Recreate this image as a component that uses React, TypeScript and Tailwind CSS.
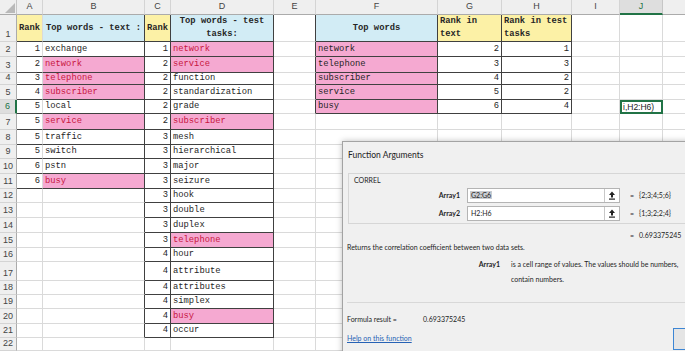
import React from "react";

type Fill = "pink" | "yellow" | "cyan";

interface CellData {
  text: string;
  align?: "left" | "right" | "center";
  fill?: Fill;
  hot?: boolean;
  bold?: boolean;
}

const COLS = ["A", "B", "C", "D", "E", "F", "G", "H", "I", "J", "K"];
const ROWS = Array.from({ length: 22 }, (_, i) => i + 1);
const ACTIVE_COL = "J";
const ACTIVE_ROW = 6;

const FILL_CLASS: Record<Fill, string> = {
  pink: "bg-[#f5a9d1]",
  yellow: "bg-[#fcf1a6]",
  cyan: "bg-[#d2ecf5]",
};

// rank of each word in the text
const textRanks: [number, string, boolean][] = [
  [1, "exchange", false],
  [2, "network", true],
  [3, "telephone", true],
  [4, "subscriber", true],
  [5, "local", false],
  [5, "service", true],
  [5, "traffic", false],
  [5, "switch", false],
  [6, "pstn", false],
  [6, "busy", true],
];

// rank of each word in the test tasks
const taskRanks: [number, string, boolean][] = [
  [1, "network", true],
  [2, "service", true],
  [2, "function", false],
  [2, "standardization", false],
  [2, "grade", false],
  [2, "subscriber", true],
  [3, "mesh", false],
  [3, "hierarchical", false],
  [3, "major", false],
  [3, "seizure", false],
  [3, "hook", false],
  [3, "double", false],
  [3, "duplex", false],
  [3, "telephone", true],
  [4, "hour", false],
  [4, "attribute", false],
  [4, "attributes", false],
  [4, "simplex", false],
  [4, "busy", true],
  [4, "occur", false],
];

const compared: [string, number, number][] = [
  ["network", 2, 1],
  ["telephone", 3, 3],
  ["subscriber", 4, 2],
  ["service", 5, 2],
  ["busy", 6, 4],
];

const cells: Record<string, CellData> = {
  A1: { text: "Rank", fill: "yellow", bold: true, align: "center" },
  B1: { text: "Top words - text :", fill: "cyan", bold: true, align: "center" },
  C1: { text: "Rank", fill: "yellow", bold: true, align: "center" },
  D1: { text: "Top words - test\ntasks:", fill: "cyan", bold: true, align: "center" },
  F1: { text: "Top words", fill: "cyan", bold: true, align: "center" },
  G1: { text: "Rank in\ntext", fill: "yellow", bold: true },
  H1: { text: "Rank in test\ntasks", fill: "yellow", bold: true },
};

textRanks.forEach(([rank, word, hot], i) => {
  cells[`A${i + 2}`] = { text: String(rank), align: "right" };
  cells[`B${i + 2}`] = { text: word, hot, fill: hot ? "pink" : undefined };
});
taskRanks.forEach(([rank, word, hot], i) => {
  cells[`C${i + 2}`] = { text: String(rank), align: "right" };
  cells[`D${i + 2}`] = { text: word, hot, fill: hot ? "pink" : undefined };
});
compared.forEach(([word, a, b], i) => {
  cells[`F${i + 2}`] = { text: word, fill: "pink" };
  cells[`G${i + 2}`] = { text: String(a), align: "right" };
  cells[`H${i + 2}`] = { text: String(b), align: "right" };
});

function inTable(col: string | undefined, row: number) {
  if (!col) return false;
  if ((col === "A" || col === "B") && row <= 11) return true;
  if ((col === "C" || col === "D") && row <= 21) return true;
  if ((col === "F" || col === "G" || col === "H") && row <= 6) return true;
  return false;
}

function SheetCell({ col, row }: { col: string; row: number }) {
  const data = cells[`${col}${row}`];
  const next = COLS[COLS.indexOf(col) + 1];
  const darkRight =
    col === "A" && row <= 11 ? false : inTable(col, row) || inTable(next, row);
  const darkBottom = inTable(col, row);

  if (col === ACTIVE_COL && row === ACTIVE_ROW) {
    return (
      <div className="border-2 border-[#217346] bg-white flex items-center overflow-hidden whitespace-nowrap pl-[1px] font-['Liberation_Sans',Arial,sans-serif] text-[8.5px] text-[#222]">
        i,H2:H6)
      </div>
    );
  }

  const align =
    data?.align === "right"
      ? "justify-end text-right pr-[2px]"
      : data?.align === "center"
      ? "justify-center text-center"
      : "justify-start text-left pl-[2px]";

  return (
    <div
      className={[
        "flex items-center overflow-hidden border-r border-b whitespace-pre-line leading-[13px]",
        darkRight ? "border-r-[#404040]" : "border-r-[#dadada]",
        darkBottom ? "border-b-[#404040]" : "border-b-[#dadada]",
        data?.fill ? FILL_CLASS[data.fill] : "bg-white",
        data?.hot ? "text-[#c8163f]" : "text-[#262626]",
        data?.bold ? "font-bold" : "",
        align,
      ].join(" ")}
    >
      {data?.text}
    </div>
  );
}

function Sheet() {
  return (
    <div className="grid grid-cols-[17px_26px_102px_26px_103px_42px_122px_64px_70px_48px_43px_70px] grid-rows-[15px_27px_15px_16px_12px_15px_14px_16px_15px_14px_15px_15px_14px_15px_15px_15px_14px_19px_14px_14px_15px_14px_13px] font-['Liberation_Mono','Courier_New',monospace] text-[8.8px]">
      <div className="relative bg-[#efefef] border-r border-b border-r-[#c6c6c6] border-b-[#ababab]">
        <svg className="absolute right-[1px] bottom-[1px]" width="10" height="10" viewBox="0 0 10 10">
          <polygon points="10,0 10,10 0,10" fill="#b9b9b9" />
        </svg>
      </div>
      {COLS.map((col) => (
        <div
          key={col}
          className={
            col === ACTIVE_COL
              ? "flex items-center justify-center bg-[#dedede] border-r border-r-[#c6c6c6] border-b-2 border-b-[#217346] text-[#217346] font-['Liberation_Sans',Arial,sans-serif] text-[9px]"
              : "flex items-center justify-center bg-[#efefef] border-r border-b border-r-[#d4d4d4] border-b-[#ababab] text-[#444] font-['Liberation_Sans',Arial,sans-serif] text-[9px]"
          }
        >
          {/* K is scrolled mostly out of view, its letter isn't visible */}
          {col === "K" ? "" : col}
        </div>
      ))}
      {ROWS.map((row) => (
        <React.Fragment key={row}>
          <div
            className={
              row === ACTIVE_ROW
                ? "flex items-end justify-center leading-[13px] bg-[#dedede] border-r-2 border-r-[#217346] border-b border-b-[#d4d4d4] text-[#217346] font-['Liberation_Sans',Arial,sans-serif] text-[9px]"
                : "flex items-end justify-center leading-[13px] bg-[#efefef] border-r border-b border-r-[#ababab] border-b-[#d4d4d4] text-[#444] font-['Liberation_Sans',Arial,sans-serif] text-[9px]"
            }
          >
            {row}
          </div>
          {COLS.map((col) => (
            <SheetCell key={col} col={col} row={row} />
          ))}
        </React.Fragment>
      ))}
    </div>
  );
}

function RefButton() {
  return (
    <div className="w-[15px] h-full shrink-0 border-l border-[#c8c8c8] flex items-center justify-center">
      <svg width="8" height="9" viewBox="0 0 8 9">
        <path d="M4 0.5 L1 4 H3 V6.5 H5 V4 H7 Z" fill="#222" />
        <rect x="1" y="7.5" width="6" height="1.2" fill="#222" />
      </svg>
    </div>
  );
}

function ArgRow({ label, value, result, selected }: { label: string; value: string; result: string; selected?: boolean }) {
  return (
    <div className="flex items-center h-[15px]">
      <div className="w-[111px] shrink-0 text-right font-bold">{label}</div>
      <div className="ml-[7px] w-[153px] shrink-0 h-[15px] bg-white border border-[#b4b4b4] flex items-center">
        <div className="flex-1 pl-[2px]">
          <span className={selected ? "bg-[#c9ccd1] px-[1px]" : "px-[1px]"}>{value}</span>
        </div>
        <RefButton />
      </div>
      <div className="ml-[10px] shrink-0">=</div>
      <div className="ml-[5px] whitespace-nowrap">{result}</div>
    </div>
  );
}

function FunctionDialog() {
  return (
    <div className="absolute left-[342px] top-[141px] w-[390px] h-[240px] bg-[#f0f0f0] border border-[#a3a3a3] shadow-[0_0_6px_rgba(0,0,0,0.25)] font-['Lato','Liberation_Sans',sans-serif] text-[7px] text-[#1e1e1e]">
      <div className="h-[26px] flex items-center pl-[5px] text-[8.5px] text-[#222]">Function Arguments</div>
      <div className="ml-[5px] mt-[5px] h-[51px] border border-[#d6d6d6]">
        <div className="h-[12px] flex items-center pl-[5px]">CORREL</div>
        <div className="mt-[2px] flex flex-col gap-[3px]">
          <ArgRow label="Array1" value="G2:G6" result="{2;3;4;5;6}" selected />
          <ArgRow label="Array2" value="H2:H6" result="{1;3;2;2;4}" />
        </div>
      </div>
      <div className="mt-[5px] h-[12px] flex items-center pl-[287px]">
        <span>=</span>
        <span className="ml-[5px]">0.693375245</span>
      </div>
      <div className="h-[12px] flex items-center pl-[4px]">Returns the correlation coefficient between two data sets.</div>
      <div className="mt-[4px] flex">
        <div className="w-[157px] shrink-0 text-right font-bold leading-[15px]">Array1</div>
        <div className="ml-[11px] leading-[15px]">
          <div className="whitespace-nowrap">is a cell range of values. The values should be numbers,</div>
          <div>contain numbers.</div>
        </div>
      </div>
      <div className="mt-[15px] ml-[4px] border-t border-[#d8d8d8]" />
      <div className="mt-[10px] h-[12px] flex items-center pl-[4px]">
        <span className="w-[76px] shrink-0">Formula result =</span>
        <span>0.693375245</span>
      </div>
      <div className="mt-[3px] flex items-start">
        <div className="ml-[4px] w-[326px] shrink-0 pt-[5px]">
          <a className="text-[#2662b5] underline">Help on this function</a>
        </div>
        <div className="w-[60px] h-[22px] bg-[#e5e5e5] border border-[#3d86d4]" />
      </div>
    </div>
  );
}

export default function App() {
  return (
    <div className="relative w-[685px] h-[351px] overflow-hidden bg-white">
      <Sheet />
      <FunctionDialog />
    </div>
  );
}
